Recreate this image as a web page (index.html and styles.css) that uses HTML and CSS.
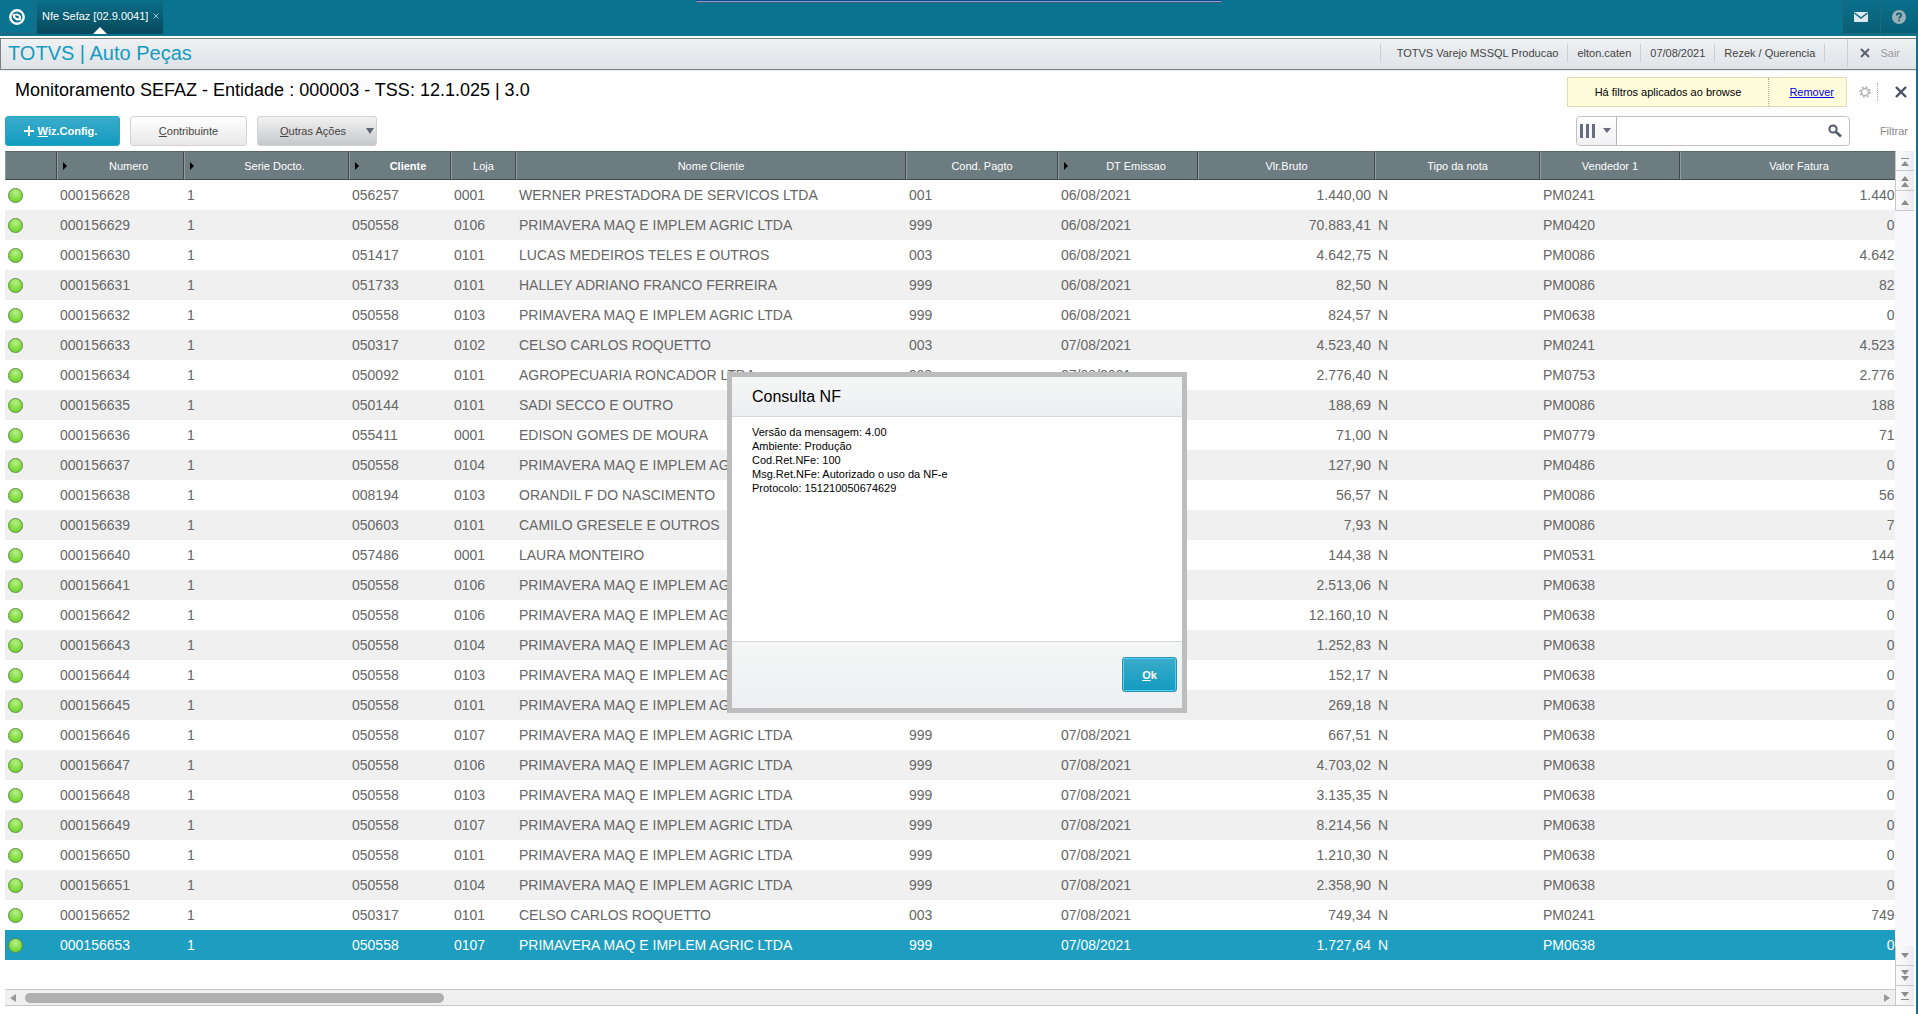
FILE: index.html
```html
<!DOCTYPE html>
<html lang="pt-BR">
<head>
    <meta charset="UTF-8">
    <meta name="viewport" content="width=device-width, initial-scale=1.0">
    <title>Monitoramento SEFAZ</title>
    <link rel="stylesheet" href="styles.css">
</head>
<body>
    <div class="topbar">
        <button class="home" aria-label="Início">
            <svg width="16" height="16" viewBox="0 0 16 16"><circle cx="8" cy="8" r="6.7" fill="none" stroke="#fff" stroke-width="2.4"/><path d="M3.5 5L8.5 4.4L12 7V11.2L7.6 11.6L4 8.6Z" fill="#fff"/><path d="M6.2 6.3L9.6 6.9L9.8 9.6L6.6 8.6Z" fill="#0a6a84"/></svg>
        </button>
        <div class="tab">
            <span>Nfe Sefaz [02.9.0041]</span>
            <button class="tab-close" aria-label="Fechar aba"><svg width="6" height="6" viewBox="0 0 6 6"><path d="M0.5 0.5L5.5 5.5M5.5 0.5L0.5 5.5" stroke="#9cc4d0"/></svg></button>
        </div>
        <div class="notch"></div>
        <div class="top-actions">
            <button aria-label="Mensagens"><svg width="14" height="10" viewBox="0 0 14 10"><rect width="14" height="10" rx="1" fill="#dfe8eb"/><path d="M0.5 1L7 6L13.5 1" fill="none" stroke="#0a6a82" stroke-width="1.5"/></svg></button>
            <button aria-label="Ajuda"><svg width="14" height="14" viewBox="0 0 14 14"><circle cx="7" cy="7" r="7" fill="#9aafb6"/><path d="M4.8 5.4C4.8 2.6 9.2 2.6 9.2 5.3C9.2 6.8 7 6.9 7 8.6M7 9.6V11.2" fill="none" stroke="#0a5f75" stroke-width="1.7"/></svg></button>
        </div>
    </div>

    <div class="page">
        <div class="sysbar">
            <span class="brand">TOTVS | Auto Peças</span>
            <ul class="session">
                <li>TOTVS Varejo MSSQL Producao</li>
                <li>elton.caten</li>
                <li>07/08/2021</li>
                <li>Rezek / Querencia</li>
            </ul>
            <button class="exit"><svg width="10" height="10" viewBox="0 0 10 10"><path d="M1 1L9 9M9 1L1 9" stroke="#5a6070" stroke-width="2"/></svg>Sair</button>
        </div>

        <div class="main">
            <div class="title-row">
                <h1>Monitoramento SEFAZ - Entidade : 000003 - TSS: 12.1.025 | 3.0</h1>
                <div class="filter-info">
                    <span>Há filtros aplicados ao browse</span>
                    <a href="#">Remover</a>
                </div>
                <button class="icon-btn gear" aria-label="Configurar"><svg width="12" height="12" viewBox="0 0 14 14"><circle cx="7" cy="7" r="4.2" fill="none" stroke="#b4b4b8" stroke-width="1.8"/><circle cx="7" cy="7" r="5.8" fill="none" stroke="#b4b4b8" stroke-width="2" stroke-dasharray="2.2 2.355"/></svg></button>
                <button class="icon-btn close" aria-label="Fechar"><svg width="12" height="12" viewBox="0 0 12 12"><path d="M1 1L11 11M11 1L1 11" stroke="#465064" stroke-width="2.4"/></svg></button>
            </div>

            <div class="toolbar">
                <button class="btn primary"><svg width="10" height="10" viewBox="0 0 10 10"><path d="M5 0V10M0 5H10" stroke="#fff" stroke-width="2"/></svg><span><u>W</u>iz.Config.</span></button>
                <button class="btn"><span><u>C</u>ontribuinte</span></button>
                <button class="btn menu"><span><u>O</u>utras Ações</span><svg width="8" height="6" viewBox="0 0 8 6"><path d="M0 0H8L4 6Z" fill="#5f6575"/></svg></button>
                <div class="search">
                    <button class="columns" aria-label="Colunas"><svg width="32" height="14" viewBox="0 0 32 14"><path d="M0 0H3V14H0ZM6 0H9V14H6ZM12 0H15V14H12ZM23 4H31L27 9Z" fill="#666d80"/></svg></button>
                    <input type="text" aria-label="Pesquisar">
                    <button class="lupa" aria-label="Buscar"><svg width="14" height="14" viewBox="0 0 14 14"><circle cx="5" cy="5" r="3.6" fill="none" stroke="#4f586b" stroke-width="2"/><path d="M8 8L13 12.5" stroke="#4f586b" stroke-width="2.6"/></svg></button>
                </div>
                <button class="filtrar">Filtrar</button>
            </div>

            <div class="browse">
                <div class="grid-area">
                    <div class="grid-view">
                        <table class="grid">
                            <colgroup>
                                <col class="c-status"><col class="c-numero"><col class="c-serie"><col class="c-cliente"><col class="c-loja"><col class="c-nome"><col class="c-pagto"><col class="c-emissao"><col class="c-bruto"><col class="c-tipo"><col class="c-vendedor"><col class="c-fatura">
                            </colgroup>
                            <thead>
                                <tr>
                                    <th></th>
                                    <th class="key">Numero</th>
                                    <th class="key">Serie Docto.</th>
                                    <th class="key sorted">Cliente</th>
                                    <th>Loja</th>
                                    <th>Nome Cliente</th>
                                    <th>Cond. Pagto</th>
                                    <th class="key">DT Emissao</th>
                                    <th>Vlr.Bruto</th>
                                    <th>Tipo da nota</th>
                                    <th>Vendedor 1</th>
                                    <th>Valor Fatura</th>
                                </tr>
                            </thead>
                            <tbody id="notas"></tbody>
                        </table>
                    </div>
                    <div class="hscroll">
                        <svg width="6" height="8" viewBox="0 0 6 8"><path d="M6 0V8L0 4Z" fill="#999"/></svg>
                        <div class="track"><div class="thumb"></div></div>
                        <svg width="6" height="8" viewBox="0 0 6 8"><path d="M0 0V8L6 4Z" fill="#999"/></svg>
                    </div>
                </div>
                <div class="vscroll">
                    <div class="group up">
                        <button aria-label="Primeiro"><svg width="8" height="8" viewBox="0 0 8 8"><path d="M0 0H8V1H0ZM4 3L8 8H0Z" fill="#8c8c8c"/></svg></button>
                        <button aria-label="Página anterior"><svg width="8" height="12" viewBox="0 0 8 12"><path d="M4 0L8 5H0ZM4 6L8 11H0Z" fill="#8c8c8c"/></svg></button>
                        <button aria-label="Anterior"><svg width="8" height="5" viewBox="0 0 8 5"><path d="M4 0L8 5H0Z" fill="#8c8c8c"/></svg></button>
                    </div>
                    <div class="group">
                        <button aria-label="Próximo"><svg width="8" height="5" viewBox="0 0 8 5"><path d="M0 0H8L4 5Z" fill="#8c8c8c"/></svg></button>
                        <button aria-label="Próxima página"><svg width="8" height="12" viewBox="0 0 8 12"><path d="M0 0H8L4 5ZM0 6H8L4 11Z" fill="#8c8c8c"/></svg></button>
                        <button aria-label="Último"><svg width="8" height="8" viewBox="0 0 8 8"><path d="M0 0H8L4 5ZM0 7H8V8H0Z" fill="#8c8c8c"/></svg></button>
                    </div>
                </div>
            </div>

            <div class="modal">
                <div class="modal-content" role="dialog" aria-labelledby="modal-title">
                    <h2 id="modal-title">Consulta NF</h2>
                    <div class="modal-body">
                        <p>Versão da mensagem: 4.00</p>
                        <p>Ambiente: Produção</p>
                        <p>Cod.Ret.NFe: 100</p>
                        <p>Msg.Ret.NFe: Autorizado o uso da NF-e</p>
                        <p>Protocolo: 151210050674629</p>
                    </div>
                    <div class="modal-footer">
                        <button id="okButton" class="ok"><span><u>O</u>k</span></button>
                    </div>
                </div>
            </div>
        </div>
    </div>

    <script>
        const PRIMAVERA = 'PRIMAVERA MAQ E IMPLEM AGRIC LTDA';

        // cliente, loja, nome, cond. pagto, emissao, valor bruto, vendedor, valor fatura
        const notas = [
            ['056257', '0001', 'WERNER PRESTADORA DE SERVICOS LTDA', '001', '06/08/2021', '1.440,00', 'PM0241', '1.440,00'],
            ['050558', '0106', PRIMAVERA, '999', '06/08/2021', '70.883,41', 'PM0420', '0,00'],
            ['051417', '0101', 'LUCAS MEDEIROS TELES E OUTROS', '003', '06/08/2021', '4.642,75', 'PM0086', '4.642,75'],
            ['051733', '0101', 'HALLEY ADRIANO FRANCO FERREIRA', '999', '06/08/2021', '82,50', 'PM0086', '82,50'],
            ['050558', '0103', PRIMAVERA, '999', '06/08/2021', '824,57', 'PM0638', '0,00'],
            ['050317', '0102', 'CELSO CARLOS ROQUETTO', '003', '07/08/2021', '4.523,40', 'PM0241', '4.523,40'],
            ['050092', '0101', 'AGROPECUARIA RONCADOR LTDA', '999', '07/08/2021', '2.776,40', 'PM0753', '2.776,40'],
            ['050144', '0101', 'SADI SECCO E OUTRO', '999', '07/08/2021', '188,69', 'PM0086', '188,69'],
            ['055411', '0001', 'EDISON GOMES DE MOURA', '001', '07/08/2021', '71,00', 'PM0779', '71,00'],
            ['050558', '0104', PRIMAVERA, '999', '07/08/2021', '127,90', 'PM0486', '0,00'],
            ['008194', '0103', 'ORANDIL F DO NASCIMENTO', '999', '07/08/2021', '56,57', 'PM0086', '56,57'],
            ['050603', '0101', 'CAMILO GRESELE E OUTROS', '999', '07/08/2021', '7,93', 'PM0086', '7,93'],
            ['057486', '0001', 'LAURA MONTEIRO', '001', '07/08/2021', '144,38', 'PM0531', '144,38'],
            ['050558', '0106', PRIMAVERA, '999', '07/08/2021', '2.513,06', 'PM0638', '0,00'],
            ['050558', '0106', PRIMAVERA, '999', '07/08/2021', '12.160,10', 'PM0638', '0,00'],
            ['050558', '0104', PRIMAVERA, '999', '07/08/2021', '1.252,83', 'PM0638', '0,00'],
            ['050558', '0103', PRIMAVERA, '999', '07/08/2021', '152,17', 'PM0638', '0,00'],
            ['050558', '0101', PRIMAVERA, '999', '07/08/2021', '269,18', 'PM0638', '0,00'],
            ['050558', '0107', PRIMAVERA, '999', '07/08/2021', '667,51', 'PM0638', '0,00'],
            ['050558', '0106', PRIMAVERA, '999', '07/08/2021', '4.703,02', 'PM0638', '0,00'],
            ['050558', '0103', PRIMAVERA, '999', '07/08/2021', '3.135,35', 'PM0638', '0,00'],
            ['050558', '0107', PRIMAVERA, '999', '07/08/2021', '8.214,56', 'PM0638', '0,00'],
            ['050558', '0101', PRIMAVERA, '999', '07/08/2021', '1.210,30', 'PM0638', '0,00'],
            ['050558', '0104', PRIMAVERA, '999', '07/08/2021', '2.358,90', 'PM0638', '0,00'],
            ['050317', '0101', 'CELSO CARLOS ROQUETTO', '003', '07/08/2021', '749,34', 'PM0241', '749,34'],
            ['050558', '0107', PRIMAVERA, '999', '07/08/2021', '1.727,64', 'PM0638', '0,00']
        ];

        function showNotas() {
            const tbody = document.getElementById('notas');
            notas.forEach((n, index) => {
                const tr = document.createElement('tr');
                if (index === notas.length - 1) {
                    tr.className = 'selected';
                }
                tr.innerHTML = `<td><span class="status"></span></td><td>000${156628 + index}</td><td>1</td>
                    <td>${n[0]}</td><td>${n[1]}</td><td>${n[2]}</td><td>${n[3]}</td><td>${n[4]}</td>
                    <td class="num">${n[5]}</td><td>N</td><td>${n[6]}</td><td class="num">${n[7]}</td>`;
                tbody.appendChild(tr);
            });
        }

        document.getElementById('okButton').onclick = function() {
            document.querySelector('.modal').style.display = 'none';
        };

        showNotas();
    </script>
</body>
</html>
```

FILE: styles.css
```css
* {
    box-sizing: border-box;
}

body {
    margin: 0;
    height: 100vh;
    display: flex;
    flex-direction: column;
    overflow: hidden;
    background-color: #0a738f;
    font-family: "Liberation Sans", Arial, sans-serif;
    font-size: 11px;
    color: #444;
}

button {
    display: flex;
    align-items: center;
    justify-content: center;
    padding: 0;
    border: none;
    background: none;
    font: inherit;
    color: inherit;
    cursor: pointer;
}

.topbar {
    position: relative;
    display: flex;
    align-items: flex-start;
    height: 36px;
    background-color: #0a738f;
}

.home {
    width: 36px;
    height: 34px;
    padding-right: 2px;
    border-right: 1px solid #27667a;
    border-bottom: 1px solid #27667a;
}

.tab {
    position: relative;
    display: flex;
    align-items: center;
    gap: 5px;
    height: 34px;
    margin-left: 1px;
    padding: 0 4px 2px 5px;
    background: linear-gradient(#0a6f8a, #08485a);
    color: #fff;
}

.tab::after {
    content: "";
    position: absolute;
    bottom: 0;
    left: 50%;
    margin-left: -7px;
    border: 7px solid transparent;
    border-top: none;
    border-bottom-color: #fff;
}

.notch {
    position: absolute;
    top: 0;
    left: 50%;
    width: 526px;
    height: 3px;
    transform: translateX(-50%);
    background: linear-gradient(#0d4a94 1px, #7fa0d0 1px);
    border-bottom: 1px solid #4c5f6c;
    border-radius: 0 0 2px 2px;
}

.top-actions {
    display: flex;
    margin-left: auto;
}

.top-actions button {
    width: 38px;
    height: 34px;
    padding-right: 2px;
    border-left: 1px solid #27667a;
    border-bottom: 1px solid #27667a;
    background: linear-gradient(#0a708b, #085f77);
}

.page {
    flex: 1;
    min-height: 0;
    display: flex;
    flex-direction: column;
    margin-right: 2px;
    padding-top: 2px;
    background-color: #fff;
}

.sysbar {
    display: flex;
    align-items: center;
    height: 32px;
    padding-bottom: 2px;
    border: 1px solid #808080;
    border-right: none;
    background: linear-gradient(#eff1f3, #dfe3e7);
    box-shadow: 0 1px #e8eaec;
}

.brand {
    padding-left: 7px;
    font-size: 20px;
    color: #159bc0;
}

.session {
    display: flex;
    margin: 0 22px 0 auto;
    padding: 0;
    list-style: none;
    border-right: 1px solid #cdd0d2;
}

.session li {
    padding: 0 9px;
    line-height: 18px;
    border-left: 1px solid #cdd0d2;
}

.session li:first-child {
    padding-left: 16px;
}

.exit {
    height: 28px;
    gap: 10px;
    padding: 0 16px 0 12px;
    border-left: 1px solid #cdd0d2;
    color: #999;
}

.main {
    position: relative;
    flex: 1;
    min-height: 0;
    display: flex;
    flex-direction: column;
    padding: 7px 2px 8px 5px;
}

.title-row {
    display: flex;
    align-items: center;
    height: 30px;
    margin-bottom: 9px;
}

.title-row h1 {
    margin: 0 auto 4px 10px;
    font-size: 18px;
    font-weight: normal;
    color: #000;
}

.filter-info {
    display: flex;
    align-items: center;
    height: 30px;
    border: 1px solid #dedeb5;
    background-color: #fffcdc;
    line-height: 28px;
    color: #000;
}

.filter-info span {
    padding: 0 27px;
    border-right: 1px dotted #aaa;
}

.filter-info a {
    padding: 0 12px 0 20px;
    color: #00e;
}

.icon-btn {
    height: 18px;
}

.gear {
    padding: 0 6px 0 12px;
    border-right: 1px dotted #aaa;
}

.close {
    padding: 0 7px 0 17px;
}

.toolbar {
    display: flex;
    align-items: center;
    gap: 10px;
    height: 30px;
    margin-bottom: 5px;
}

.btn {
    width: 117px;
    height: 30px;
    border: 1px solid #d2d2d2;
    border-radius: 3px;
    background: linear-gradient(#fff, #e8e8e8);
}

.btn.primary {
    width: 115px;
    gap: 4px;
    padding-right: 4px;
    border-color: #27a3c4;
    background: linear-gradient(#3baccb, #129bc0);
    font-weight: bold;
    color: #fff;
}

.btn.menu {
    width: 120px;
    gap: 20px;
    padding-left: 20px;
    background: linear-gradient(#f2f2f2, #c6c8c9);
}

.search {
    display: flex;
    align-items: center;
    width: 274px;
    height: 30px;
    margin-left: auto;
    border: 1px solid #c0c0c0;
    border-radius: 4px;
}

.search input {
    flex: 1;
    min-width: 0;
    height: 28px;
    padding: 0 6px;
    border: none;
    background: none;
}

.columns {
    width: 40px;
    height: 28px;
    border-right: 1px solid #b5b5b5;
    background: linear-gradient(#fff, #f0f0f2);
    border-radius: 4px 0 0 4px;
}

.lupa {
    padding: 0 7px;
}

.filtrar {
    margin: 0 6px 0 20px;
    color: #888;
}

.browse {
    flex: 1;
    min-height: 0;
    display: flex;
}

.grid-area {
    flex: 1;
    min-width: 0;
    display: flex;
    flex-direction: column;
}

.grid-view {
    flex: 1;
    min-height: 0;
    overflow: hidden;
}

.grid {
    width: 1913px;
    table-layout: fixed;
    border-collapse: separate;
    border-spacing: 0;
}

.c-status { width: 52px; }
.c-numero { width: 127px; }
.c-serie { width: 165px; }
.c-cliente { width: 102px; }
.c-loja { width: 65px; }
.c-nome { width: 390px; }
.c-pagto { width: 152px; }
.c-emissao { width: 140px; }
.c-bruto { width: 177px; }
.c-tipo { width: 165px; }
.c-vendedor { width: 140px; }
.c-fatura { width: 238px; }

.grid th {
    position: relative;
    height: 29px;
    padding: 0;
    border: 1px solid #40484c;
    border-top-color: #5b676b;
    border-left-color: #929ca0;
    background-color: #6d7c81;
    font-weight: normal;
    color: #fff;
}

.grid th.key {
    padding-left: 16px;
}

.grid th.key::before {
    content: "";
    position: absolute;
    top: 10px;
    left: 5px;
    border: 4px solid transparent;
    border-right: none;
    border-left-color: #000;
}

.grid th.sorted {
    font-weight: bold;
}

.grid td {
    height: 30px;
    padding: 0 3px;
    font-size: 14px;
    color: #666;
    white-space: nowrap;
}

.grid td.num {
    padding-right: 4px;
    text-align: right;
}

.grid tbody tr:nth-child(even) {
    background-color: #f0f0f0;
}

.grid tbody tr.selected {
    background-color: #1d9dbf;
}

.grid tr.selected td {
    color: #fff;
}

.status {
    display: block;
    width: 15px;
    height: 15px;
    border: 1px solid #5c8a48;
    border-radius: 50%;
    background: radial-gradient(circle at 50% 30%, #b9f08c, #7fdc3c 60%, #6ccc2e);
}

.hscroll {
    display: flex;
    align-items: center;
    height: 17px;
    padding: 0 5px;
    border: 1px solid #c8c8c8;
    border-width: 1px 0;
    background-color: #f0f0f0;
}

.track {
    flex: 1;
    margin: 0 9px;
}

.thumb {
    width: 419px;
    height: 10px;
    border-radius: 5px;
    background-color: #b0b0b0;
}

.vscroll {
    display: flex;
    flex-direction: column;
    justify-content: space-between;
    width: 19px;
    background-color: #f8f8fb;
}

.vscroll button {
    width: 19px;
    height: 20px;
    border-left: 1px solid #c8c8c8;
    border-bottom: 1px solid #c8c8c8;
    background: linear-gradient(90deg, #fbfbfb, #ebecee);
}

.vscroll .up button {
    padding-top: 3px;
}

.modal {
    position: absolute;
    inset: 0;
    display: flex;
    align-items: center;
    justify-content: center;
    padding-right: 2px;
}

.modal-content {
    width: 460px;
    border: 5px solid #bdbdbd;
    background-color: #fff;
    color: #000;
}

.modal-content h2 {
    margin: 0;
    padding: 1px 20px 0;
    border-bottom: 1px solid #d6d6d6;
    background: linear-gradient(#f5f7f6, #edeef1);
    font-size: 16px;
    line-height: 38px;
    font-weight: normal;
}

.modal-body {
    height: 224px;
    padding: 8px 20px;
    line-height: 14px;
}

.modal-body p {
    margin: 0;
}

.modal-footer {
    display: flex;
    align-items: center;
    justify-content: flex-end;
    height: 67px;
    padding: 0 5px;
    border-top: 1px solid #d6d6d6;
    background: linear-gradient(#f5f7f6, #edeef1);
}

.ok {
    width: 55px;
    height: 35px;
    border: 1px solid #2b8fae;
    border-radius: 3px;
    box-shadow: inset 0 0 0 1px #4fd0f5;
    background: linear-gradient(#3baccb, #129bc0);
    font-weight: bold;
    color: #fff;
}
```
